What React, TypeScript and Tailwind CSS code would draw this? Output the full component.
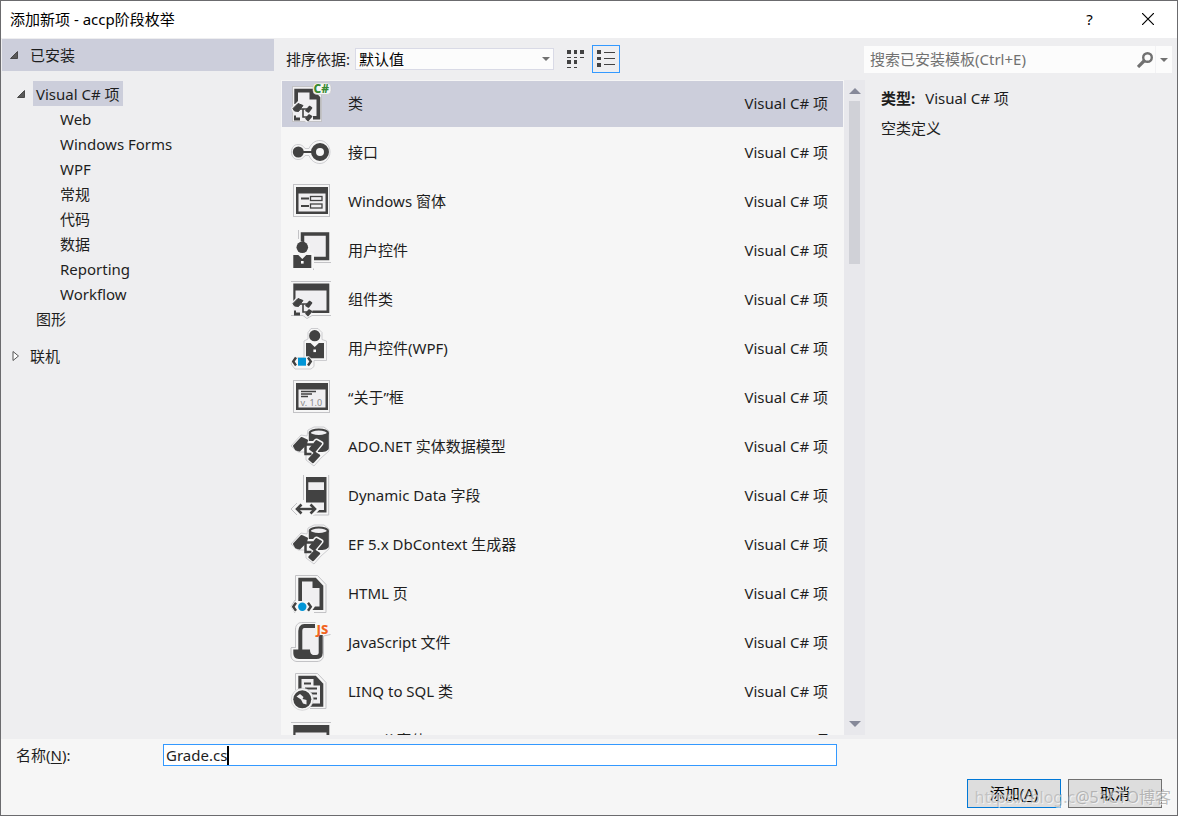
import React from "react";
import clsx from "clsx";

const DARK = "#424242";
const PAPER = "#f0eff1";
const EDGE = "#c3c3c6";

const Icon = ({ children }: { children: React.ReactNode }) => (
  <svg className="h-10 w-10 shrink-0 overflow-visible" viewBox="0 0 40 40" aria-hidden="true">
    {children}
  </svg>
);

// three linked nodes, used as a badge on the class icons
const Nodes = () => (
  <g>
    <path d="M0 24 7 17 12 18 15 20 21 21 21.500 25 20 28 21.500 31 21 34 16 38.500 12 36H2V29Z" fill={PAPER} />
    <path d="M2 24.500 7 19.500 12 21.500 7.500 27.500 3.500 27Z" fill={DARK} stroke={DARK} strokeLinejoin="round" />
    <path d="M9 25h7M12 25v8h4" fill="none" stroke={DARK} strokeWidth="1.600" />
    <path d="M15 26.500 18.500 22.500 20.500 24 17.500 28ZM15 34.500 18 31 20.500 32.500 17 36.500Z" fill={DARK} stroke={DARK} strokeWidth="1.600" strokeLinejoin="round" />
    <path d="M3 31.500h2v2h4v3H3Z" fill={DARK} />
  </g>
);

const ClassIcon = () => (
  <Icon>
    <rect x="1.500" y="2.500" width="29" height="35" fill={PAPER} stroke={EDGE} />
    <path d="M3.300 4.700h18.500l7.500 8.500V35.500H22v-3.500h3.500V15.500h-7V8.500H7V20H3.300Z" fill={DARK} />
    <Nodes />
    <rect x="22" y="-1" width="18" height="11.500" rx="4" fill="#f6f6f6" stroke={EDGE} strokeWidth=".6" />
    <text x="22.500" y="8.500" fontSize="12" fontWeight="800" fill="#388a34" fontFamily="Noto Sans">C#</text>
  </Icon>
);

const InterfaceIcon = () => (
  <Icon>
    <path d="M7 11.500c3 0 5 1 7 4h4c2-5 6-8 11-8s10 5 10 11.500-5 11.500-10 11.500-9-3-11-8h-4c-2 3-4 4-7 4-4 0-6.500-3-6.500-7.500s2.500-7.500 6.500-7.500Z" fill="#f6f6f6" stroke={EDGE} strokeWidth=".8" />
    <circle cx="7.300" cy="19" r="5.500" fill={DARK} />
    <path d="M10 19h12" stroke={DARK} strokeWidth="2" />
    <circle cx="29" cy="19" r="6.500" fill="#f6f6f6" stroke={DARK} strokeWidth="5" />
  </Icon>
);

const FormIcon = () => (
  <Icon>
    <rect x="2.500" y="2.500" width="36" height="32" fill="#f6f6f6" stroke={EDGE} />
    <path d="M5 5h32v27H5Z" fill={DARK} />
    <path d="M7.500 11.500h27v18h-27Z" fill={PAPER} />
    <path d="M10 16.500h8M10 24h8" stroke={DARK} strokeWidth="2" />
    <rect x="19.500" y="14.500" width="11.500" height="4" fill={PAPER} stroke={DARK} strokeWidth="1.300" />
    <rect x="19.500" y="22" width="11.500" height="4" fill={PAPER} stroke={DARK} strokeWidth="1.300" />
  </Icon>
);

const UserControlIcon = () => (
  <Icon>
    <path d="M7.500-1v9M22.500 39v-7.500H40" fill="none" stroke={EDGE} />
    <rect x="11.500" y="3" width="25" height="24.500" fill={PAPER} stroke={DARK} strokeWidth="3.500" />
    <path d="M3 10.500h7l9 2v8l4 2v15H0V22l4-2Z" fill="#f6f6f6" />
    <circle cx="11.300" cy="16.300" r="5.800" fill={DARK} />
    <path d="M2.300 24h5l4 4 4-4h5v13h-18Z" fill={DARK} />
    <rect x="10" y="30" width="2.600" height="2.600" fill="#fff" />
  </Icon>
);

const ComponentIcon = () => (
  <Icon>
    <path d="M0 1.500h40M0 35.500h12l4 3 5-3h19" fill="none" stroke={EDGE} />
    <path d="M2.300 3.500h36v29.500h-36Z" fill={DARK} />
    <path d="M4.500 10.500h31v20h-31Z" fill={PAPER} />
    <g transform="translate(0 -1)">
      <Nodes />
    </g>
  </Icon>
);

const WpfControlIcon = () => (
  <Icon>
    <path d="M20-.5h7l4 4v7l4.500 1.500v19.500H23v6l-3 2.500H4l-4-5 4-6h9V12l4-2V3.500Z" fill="#f6f6f6" stroke={EDGE} strokeWidth=".8" />
    <circle cx="23.700" cy="6.700" r="5.600" fill={DARK} />
    <path d="M15 14h4.500l4.200 4 4.200-4H33v15.300H20l-2-2h-3Z" fill={DARK} />
    <rect x="22.400" y="20.500" width="2.600" height="2.600" fill="#fff" />
    <path d="M5 28.500 2.200 32.500 5 36.500M17 28.500l2.800 4-2.800 4" fill="none" stroke={DARK} strokeWidth="2.400" />
    <rect x="7" y="28.700" width="8" height="8" fill="#0095d7" />
  </Icon>
);

const AboutIcon = () => (
  <Icon>
    <rect x="2.500" y="2.500" width="36" height="32" fill="#f6f6f6" stroke={EDGE} />
    <path d="M5 5h32v27H5Z" fill={DARK} />
    <path d="M7.500 11.500h27v18h-27Z" fill={PAPER} />
    <path d="M10 13.500h15M10 16h11M10 18.500h7" stroke={DARK} strokeWidth="1.300" />
    <text x="9.500" y="28" fontSize="9" fill="#8a8a8a" fontFamily="Noto Sans">v. 1.0</text>
  </Icon>
);

const EntityIcon = () => (
  <Icon>
    <path d="M0 19 10 8l6 1 1-6 6-3h10l5 4v20l-8 7-7 8-8-6V25H7Z" fill="#f6f6f6" stroke={EDGE} strokeWidth=".8" />
    <path d="M17.800 6v8h8l1 11h3c4.500 0 8-1.500 8-4V6Z" fill={DARK} />
    <ellipse cx="27.800" cy="5.800" rx="9" ry="3.300" fill={PAPER} stroke={DARK} strokeWidth="2.200" />
    <path d="M19 21.500 25.500 14 30 16.500 23 25Z" fill="#f6f6f6" stroke="#f6f6f6" strokeWidth="5" strokeLinejoin="round" />
    <path d="M3 19 10.500 11 16 13.500 15 17 8.500 23.500 5 22.500Z" fill={DARK} stroke={DARK} strokeWidth="2" strokeLinejoin="round" />
    <path d="M19 22 25.500 14 30 16.500 23 25Z" fill={DARK} stroke={DARK} strokeWidth="2" strokeLinejoin="round" />
    <path d="M14.500 17.500v9.500h6M12 17.500h10" fill="none" stroke={DARK} strokeWidth="2.500" />
    <path d="M18.500 32 24 26 28 28.500 22 35Z" fill={DARK} stroke={DARK} strokeWidth="2.400" strokeLinejoin="round" />
  </Icon>
);

const DynamicDataIcon = () => (
  <Icon>
    <path d="M12.500-1v25M37.700-1v40H22" fill="none" stroke={EDGE} />
    <path d="M15 1h20.500v35.500H15Z" fill={DARK} />
    <path d="M17.300 6.300H33v7.700H17.300ZM14 26.500h19v7.500h-5l-4 4H14Z" fill={PAPER} />
    <path d="M1 33l6-6h16l6 6-6 6H7Z" fill="#f6f6f6" />
    <path d="M6 27 0 33l6 6" fill="none" stroke={EDGE} />
    <path d="M6 33h18" stroke={DARK} strokeWidth="2.400" />
    <path d="M10.500 28.500 6 33l4.500 4.500M19.500 28.500 24 33l-4.500 4.500" fill="none" stroke={DARK} strokeWidth="2.600" />
  </Icon>
);

const HtmlIcon = () => (
  <Icon>
    <path d="M4.500 27V1.500h22l8.500 9v28H23M4 26 0 32.500 4 39" fill="none" stroke={EDGE} />
    <path d="M7.300 3.700h17.500l7.500 8V36h-25Z" fill={DARK} />
    <path d="M11 7.500h10.500V14h7v18.500H11Z" fill={PAPER} />
    <path d="M5 27h15l4 5.500-4 5.500H3l-3-5.500Z" fill="#f6f6f6" />
    <path d="M5 28.700 2.200 32.700 5 36.700M17 28.700l2.800 4-2.800 4" fill="none" stroke={DARK} strokeWidth="2.400" />
    <circle cx="11.300" cy="32.700" r="4.200" fill="#0095d7" />
  </Icon>
);

const ScriptIcon = () => (
  <Icon>
    <path d="M4.500 24V6c0-4 3-6.500 6-6.500h14M0 24.500h5M0 25v8c0 3 3 5.500 6 5.500h20c4 0 6.500-3 6.500-6V13l7-1.500" fill="none" stroke={EDGE} />
    <path d="M9 27V8c0-3 1.500-5 4-5h12v9h5v20l-6 3Z" fill={PAPER} />
    <path d="M9.300 27V8c0-3 1.500-5 4-5H24" fill="none" stroke={DARK} strokeWidth="4" />
    <path d="M29.700 12v18c0 3-2 4-4.500 4" fill="none" stroke={DARK} strokeWidth="4" />
    <path d="M2.300 26.500H19c0 3 1 5.500 4 5.500h3v4H8c-4 0-5.700-3-5.700-6Z" fill={DARK} />
    <text x="25.500" y="10.500" fontSize="13" fontWeight="800" fill="#f16421" fontFamily="Noto Sans">JS</text>
  </Icon>
);

const LinqIcon = () => (
  <Icon>
    <path d="M4.500 18V1.500h22l8.500 9v26H19" fill="none" stroke={EDGE} />
    <path d="M7.300 3.700h17.500l7.500 8v23h-25Z" fill={DARK} />
    <path d="M10.500 7h12v6.500h6.500V31.500H10.500Z" fill={PAPER} />
    <path d="M13 11.500h7M14 16.500h12M19 21.500h7M21 26.500h5" stroke={DARK} strokeWidth="2" />
    <circle cx="11.300" cy="27.300" r="11" fill="#f6f6f6" stroke={EDGE} strokeWidth=".6" />
    <circle cx="11.300" cy="27.300" r="9" fill={DARK} />
    <path d="M5.500 24.500 9 22l3.500 3-1 2 4 1v4.500l-3.500-1-2-4Z" fill={PAPER} />
  </Icon>
);

const MdiIcon = () => (
  <Icon>
    <path d="M0 1.500h40" stroke={EDGE} />
    <path d="M2.300 4h36v29h-36Z" fill={DARK} />
    <path d="M4.500 11.500h31v19h-31Z" fill={PAPER} />
  </Icon>
);

const templates = [
  { name: "类", icon: ClassIcon },
  { name: "接口", icon: InterfaceIcon },
  { name: "Windows 窗体", icon: FormIcon },
  { name: "用户控件", icon: UserControlIcon },
  { name: "组件类", icon: ComponentIcon },
  { name: "用户控件(WPF)", icon: WpfControlIcon },
  { name: "“关于”框", icon: AboutIcon },
  { name: "ADO.NET 实体数据模型", icon: EntityIcon },
  { name: "Dynamic Data 字段", icon: DynamicDataIcon },
  { name: "EF 5.x DbContext 生成器", icon: EntityIcon },
  { name: "HTML 页", icon: HtmlIcon },
  { name: "JavaScript 文件", icon: ScriptIcon },
  { name: "LINQ to SQL 类", icon: LinqIcon },
  { name: "MDI 父窗体", icon: MdiIcon },
];

const categories = ["Web", "Windows Forms", "WPF", "常规", "代码", "数据", "Reporting", "Workflow"];

const OpenArrow = () => (
  <svg className="h-2 w-2 shrink-0" viewBox="0 0 8 8" aria-hidden="true">
    <path d="M7.500.5v7H.5Z" fill="#595959" stroke="#333" strokeWidth=".8" />
  </svg>
);

const Caret = ({ className }: { className?: string }) => (
  <svg className={clsx("h-1 w-2", className)} viewBox="0 0 8 4" aria-hidden="true">
    <path d="M0 0h8L4 4Z" fill="currentColor" />
  </svg>
);

const Sidebar = () => (
  <nav className="w-[273px] shrink-0 pl-px">
    <button className="flex h-8 w-full items-center gap-3 bg-[#cccedb] pl-2 text-left">
      <OpenArrow />
      已安装
    </button>
    <div className="pt-[10px]">
      <button className="flex h-[25px] items-center gap-2 pl-[15px]">
        <OpenArrow />
        <span className="h-[25px] bg-[#cccedb] px-[3px] leading-[26px]">Visual C# 项</span>
      </button>
      <ul>
        {categories.map((category) => (
          <li key={category}>
            <button className="block h-[25px] pl-[58px] leading-[26px]">{category}</button>
          </li>
        ))}
      </ul>
      <button className="block h-[25px] pl-[34px] leading-[26px]">图形</button>
    </div>
    <button className="mt-3 flex h-[25px] items-center gap-[10px] pl-[10px]">
      <svg className="h-3 w-2" viewBox="0 0 8 12" aria-hidden="true">
        <path d="M1 1.500v9L6.500 6Z" fill="#fff" stroke="#555" />
      </svg>
      联机
    </button>
  </nav>
);

const Toolbar = () => (
  <div className="flex h-[41px] items-center pb-[2px] pl-[5px]">
    <label htmlFor="sort">排序依据:</label>
    <div className="relative ml-[5px] w-[199px]">
      <select id="sort" className="block h-[22px] w-full appearance-none border border-[#d9dae6] bg-[#fcfcfc] px-[3px] leading-5 text-black outline-none">
        <option>默认值</option>
      </select>
      <Caret className="pointer-events-none absolute top-[9px] right-1 text-[#717171]" />
    </div>
    <button className="ml-[7px] flex h-7 w-7 items-center justify-center" aria-label="中等图标">
      <svg className="h-5 w-5" viewBox="0 0 20 20" aria-hidden="true">
        <path d="M2 1h4v4H2zM9 1h3v4H9zM15 1h4v4h-4zM2 11h4v4H2zM9 11h3v4H9zM2 8h4v1H2zM9 8h3v1H9zM15 8h4v1h-4zM2 18h4v1H2zM9 18h3v1H9z" fill={DARK} />
      </svg>
    </button>
    <button className="ml-[3px] flex h-7 w-7 items-center justify-center border border-[#3399ff]" aria-label="小图标">
      <svg className="h-5 w-5" viewBox="0 0 20 20" aria-hidden="true">
        <path d="M1 1h4v4H1zM1 8h4v3H1zM1 14h4v4H1zM8 3h11v1H8zM8 9h11v1H8zM8 15h11v1H8z" fill={DARK} />
      </svg>
    </button>
  </div>
);

const TemplateList = () => (
  <div className="-mr-px flex min-h-0 flex-1">
    <ul className="flex min-w-0 flex-1 flex-col gap-[3px] overflow-hidden bg-[#f6f6f6] px-px pt-px" role="listbox" aria-label="模板">
      {templates.map(({ name, icon: TemplateIcon }, index) => (
        <li
          key={name}
          role="option"
          aria-selected={index === 0}
          className={clsx("flex h-[46px] shrink-0 items-center pr-[15px] pl-[9px]", index === 0 && "bg-[#cccedb]")}
        >
          <TemplateIcon />
          <span className="ml-[17px] flex-1 pb-[2px]">{name}</span>
          <span className="pb-[2px]">Visual C# 项</span>
        </li>
      ))}
    </ul>
    <div className="flex w-[21px] flex-col items-center bg-[#e8e8ec] py-2 text-[#868999]">
      <svg className="h-[6px] w-3" viewBox="0 0 12 6" aria-hidden="true">
        <path d="M0 6h12L6 0Z" fill="currentColor" />
      </svg>
      <div className="mt-[7px] h-[163px] w-[11px] bg-[#d0d1d7]" />
      <svg className="mt-auto h-[6px] w-3" viewBox="0 0 12 6" aria-hidden="true">
        <path d="M0 0h12L6 6Z" fill="currentColor" />
      </svg>
    </div>
  </div>
);

const Details = () => (
  <aside className="w-[313px] shrink-0 pr-[5px]">
    <div className="mt-[7px] flex h-[27px] items-center bg-[#fcfcfc]">
      <input
        type="search"
        aria-label="搜索已安装模板"
        placeholder="搜索已安装模板(Ctrl+E)"
        className="min-w-0 flex-1 bg-transparent pb-[2px] pl-[6px] outline-none placeholder:text-[#717171]"
      />
      <button aria-label="搜索">
        <svg className="h-4 w-4" viewBox="0 0 16 16" aria-hidden="true">
          <circle cx="10.500" cy="5.500" r="4.300" fill="none" stroke="#717171" strokeWidth="2.400" />
          <path d="M7.500 8.500 1 15" stroke="#717171" strokeWidth="3.200" />
        </svg>
      </button>
      <button className="ml-[2px] flex h-full w-[17px] items-center justify-center border-l border-[#f2f2f4] text-[#717171]" aria-label="搜索选项">
        <Caret />
      </button>
    </div>
    <div className="pt-[15px] pl-[17px] leading-5">
      <p>
        <b className="mr-[10px]">类型:</b>
        Visual C# 项
      </p>
      <p className="mt-[10px]">空类定义</p>
    </div>
  </aside>
);

const Footer = () => (
  <footer className="relative h-[76px] shrink-0 bg-[#f6f6f6] pt-[5px]">
    <div className="flex items-center pr-[340px] pl-[15px]">
      <label htmlFor="name" className="w-[147px] shrink-0">
        名称(<u className="underline-offset-2">N</u>):
      </label>
      <div className="relative flex-1">
        <input
          id="name"
          defaultValue="Grade.cs"
          className="block h-[22px] w-full border border-[#3399ff] bg-white px-[2px] leading-5 outline-none"
        />
        {/* text cursor after the file name */}
        <span className="pointer-events-none absolute top-[2px] left-0 flex h-[19px] border-r-2 border-black pl-[3px]" aria-hidden="true">
          <span className="invisible">Grade.cs</span>
        </span>
      </div>
    </div>
    <div className="mt-[13px] flex justify-end gap-[7px] pr-[15px] text-black">
      <button className="h-[29px] w-[94px] border border-[#0078d7] bg-[#dddddd] pb-[2px]">
        添加(<u className="underline-offset-2">A</u>)
      </button>
      <button className="h-[29px] w-[94px] border border-[#707070] bg-[#dddddd] pb-[2px]">取消</button>
    </div>
    <div className="pointer-events-none absolute right-[6px] bottom-2 flex text-base leading-5 text-[#a0a0a0]/70 [text-shadow:1px_1px_0_#ffffff99]">
      <span className="text-[#b4b4b4]/70">https://blog.c</span>
      <span>@51CTO博客</span>
    </div>
  </footer>
);

const App = () => {
  return (
    <div className="flex h-screen flex-col border border-[#6b6b6e] bg-[#eeeef0] font-['Noto_Sans','Noto_Sans_CJK_SC',sans-serif] text-[15px] leading-5 text-[#1e1e1e]">
      <header className="flex h-[37px] shrink-0 items-center bg-white pb-[2px] pl-[9px] text-black">
        <h1 className="flex-1">添加新项 - accp阶段枚举</h1>
        <button className="w-[57px] text-center" aria-label="帮助">?</button>
        <button className="flex w-[59px] justify-center" aria-label="关闭">
          <svg className="h-3 w-3" viewBox="0 0 12 12" aria-hidden="true">
            <path d="M0 0 12 12M12 0 0 12" stroke="#000" strokeWidth="1.200" />
          </svg>
        </button>
      </header>
      <div className="flex min-h-0 flex-1 pt-px">
        <Sidebar />
        <main className="mb-1 ml-[7px] flex min-w-0 flex-1 flex-col">
          <Toolbar />
          <TemplateList />
        </main>
        <Details />
      </div>
      <Footer />
    </div>
  );
};

export default App;
